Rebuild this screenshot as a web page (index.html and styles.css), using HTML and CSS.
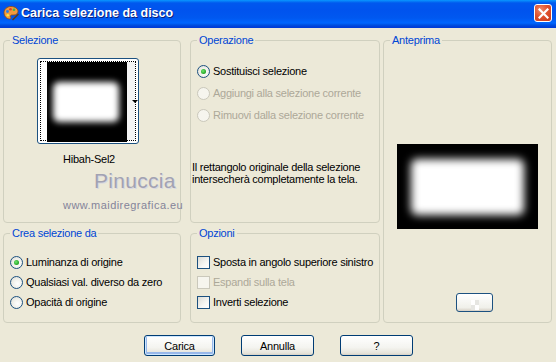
FILE: index.html
```
<!DOCTYPE html>
<html lang="it">
<head>
<meta charset="utf-8">
<title>Carica selezione da disco</title>
<link rel="stylesheet" href="styles.css">
</head>
<body>
<div class="window">
  <div class="titlebar">
    <svg class="app-icon" width="16" height="16" viewBox="0 0 16 16">
      <path d="M8 1.5C4 1.5 1 4.2 1 7.8c0 3.3 2.6 6.2 5.6 6.2 1.4 0 1.6-1 1-2-.6-1 0-2 1.3-2h2.1c2.3 0 4-1.5 4-3.7C15 3.7 12 1.5 8 1.5z" fill="#f29a3c" stroke="#8a4a12" stroke-width="0.8"/>
      <circle cx="4.5" cy="6.5" r="1.4" fill="#2f7de1"/>
      <circle cx="7.5" cy="4.3" r="1.3" fill="#e23b2e"/>
      <circle cx="11" cy="4.8" r="1.3" fill="#43b648"/>
      <circle cx="4.8" cy="10.2" r="1.3" fill="#f6e84a"/>
      <path d="M15 9.5l-5 5" stroke="#5a3a1a" stroke-width="1.6" stroke-linecap="round"/>
    </svg>
    <span class="title">Carica selezione da disco</span>
    <span class="close" aria-label="Chiudi">
      <svg width="11" height="11" viewBox="0 0 11 11"><path d="M1.5 1.5l8 8M9.5 1.5l-8 8" stroke="#fff" stroke-width="2.2" stroke-linecap="square"/></svg>
    </span>
  </div>
  <div class="content">
    <div class="groups">
      <fieldset class="group g-sel">
        <legend>Selezione</legend>
        <div class="thumb-btn">
          <div class="thumb-focus">
            <div class="thumb-img"><div class="blur-rect thumb-rect"></div></div>
            <div class="thumb-strip"><span class="drop-arrow"></span></div>
          </div>
        </div>
        <div class="thumb-name">Hibah-Sel2</div>
        <div class="watermark">
          <div class="wm-name">Pinuccia</div>
          <div class="wm-url">www.maidiregrafica.eu</div>
        </div>
      </fieldset>

      <fieldset class="group g-op">
        <legend>Operazione</legend>
        <div class="opt-list op-list">
          <label class="opt"><span class="radio checked"></span>Sostituisci selezione</label>
          <label class="opt disabled"><span class="radio"></span>Aggiungi alla selezione corrente</label>
          <label class="opt disabled"><span class="radio"></span>Rimuovi dalla selezione corrente</label>
        </div>
        <p class="desc">Il rettangolo originale della selezione intersecherà completamente la tela.</p>
      </fieldset>

      <fieldset class="group g-prev">
        <legend>Anteprima</legend>
        <div class="preview"><div class="blur-rect preview-rect"></div></div>
        <div class="small-btn">
          <svg width="14" height="10" viewBox="0 0 14 10"><path d="M3 0h4v5H3zM7 5h4v5H7z" fill="#fff"/><path d="M7 0h4v5H7zM3 5h4v5H3z" fill="#e6e6e2"/></svg>
        </div>
      </fieldset>

      <fieldset class="group g-crea">
        <legend>Crea selezione da</legend>
        <div class="opt-list crea-list">
          <label class="opt"><span class="radio checked"></span>Luminanza di origine</label>
          <label class="opt"><span class="radio"></span>Qualsiasi val. diverso da zero</label>
          <label class="opt"><span class="radio"></span>Opacità di origine</label>
        </div>
      </fieldset>

      <fieldset class="group g-opz">
        <legend>Opzioni</legend>
        <div class="opt-list crea-list">
          <label class="opt"><span class="check"></span>Sposta in angolo superiore sinistro</label>
          <label class="opt disabled"><span class="check"></span>Espandi sulla tela</label>
          <label class="opt"><span class="check"></span>Inverti selezione</label>
        </div>
      </fieldset>
    </div>
    <div class="buttons">
      <span class="btn default">Carica</span>
      <span class="btn">Annulla</span>
      <span class="btn">?</span>
    </div>
  </div>
</div>
</body>
</html>
```

FILE: styles.css
```
* { box-sizing: border-box; }
html, body { margin: 0; padding: 0; }
body {
  width: 556px;
  height: 362px;
  overflow: hidden;
  background: #ece9d8;
  font-family: "Liberation Sans", Arial, sans-serif;
  font-size: 11px;
  letter-spacing: -0.25px;
  color: #000;
}
.window {
  width: 556px;
  height: 362px;
  background: #ece9d8;
  display: flex;
  flex-direction: column;
}
.titlebar {
  height: 28px;
  flex: none;
  display: flex;
  align-items: center;
  padding: 0 4px 2px 3px;
  background: linear-gradient(to bottom, #0997ff 0, #0058ee 3px, #0053ee 10px, #0058f0 18px, #0066ff 23px, #0050e0 25px, #003dd7 27px, #003dd7 28px);
}
.app-icon { flex: none; margin-right: 2px; }
.title {
  color: #fff;
  font-weight: bold;
  font-size: 12.5px;
  letter-spacing: 0;
  text-shadow: 1px 1px 0 #0a1f7a;
  flex: 1;
}
.close {
  width: 18px;
  height: 18px;
  border: 1px solid #fff;
  border-radius: 3px;
  background: radial-gradient(circle at 35% 30%, #f08a6a 0, #e0522e 45%, #c8391a 100%);
  display: flex;
  align-items: center;
  justify-content: center;
}
.close svg { display: block; }

.content {
  flex: 1;
  padding: 6px 0 0 3px;
  display: flex;
  flex-direction: column;
}
.groups {
  display: grid;
  grid-template-columns: 187px 193px 169px;
  grid-template-rows: 189px 96px;
  row-gap: 4px;
}
.group {
  margin: 0;
  padding: 0;
  border: 1px solid #d0d0bf;
  border-radius: 4px;
  min-width: 0;
}
.group legend {
  color: #0046d5;
  padding: 0 2px;
  margin-left: 6px;
  line-height: 13px;
}
.g-sel { grid-column: 1; grid-row: 1; margin-right: 9px; }
.g-op { grid-column: 2; grid-row: 1; margin-right: 3px; }
.g-prev { grid-column: 3; grid-row: 1 / span 2; }
.g-crea { grid-column: 1; grid-row: 2; margin-right: 9px; }
.g-opz { grid-column: 2; grid-row: 2; margin-right: 3px; }

/* Selezione */
.thumb-btn {
  width: 102px;
  height: 86px;
  margin: 11px 0 0 33px;
  border: 1px solid #1c5180;
  border-radius: 3px;
  padding: 2px;
  background: #fff;
}
.thumb-focus {
  width: 100%;
  height: 100%;
  border: 1px dotted #000;
  display: flex;
  padding: 0 0 0 6px;
  background: #fff;
}
.thumb-img {
  width: 80px;
  height: 80px;
  background: #000;
  position: relative;
  overflow: hidden;
  flex: none;
}
.thumb-strip {
  flex: 1;
  background: #f4f4f4;
  display: flex;
  justify-content: flex-end;
  align-items: center;
  padding-right: 1px;
}
.drop-arrow {
  width: 0;
  height: 0;
  border-left: 3px solid transparent;
  border-right: 3px solid transparent;
  border-top: 3px solid #000;
  margin-right: -4px;
}
.blur-rect {
  position: absolute;
  background: #fff;
  border-radius: 6px;
  filter: blur(3px);
}
.thumb-rect { left: 6px; top: 20px; width: 66px; height: 40px; }
.thumb-name {
  text-align: center;
  margin: 9px 0 0 -6px;
  line-height: 13px;
}
.watermark {
  margin-left: 59px;
  margin-top: 4px;
  line-height: 1;
}
.wm-name {
  font-size: 21px;
  letter-spacing: 0.3px;
  color: #a2a2b2;
  margin-left: 31px;
  text-shadow: 1px 1px 0 #d8d8e2;
}
.wm-url {
  font-size: 11px;
  color: #84849a;
  letter-spacing: 0.45px;
  margin-top: 9px;
}

/* Options */
.opt-list { display: flex; flex-direction: column; }
.op-list { padding: 18px 0 0 6px; gap: 9px; }
.crea-list { padding: 16px 0 0 6px; gap: 7px; }
.opt {
  display: flex;
  align-items: center;
  gap: 3px;
  line-height: 13px;
  white-space: nowrap;
}
.opt.disabled { color: #aca899; }
.radio {
  width: 13px;
  height: 13px;
  border-radius: 50%;
  border: 1px solid #1c5180;
  background: radial-gradient(circle at 60% 60%, #ffffff 0, #f0f0ea 50%, #d8d8d0 100%);
  flex: none;
  display: flex;
  align-items: center;
  justify-content: center;
}
.radio.checked::after {
  content: "";
  width: 5px;
  height: 5px;
  border-radius: 50%;
  background: radial-gradient(circle at 40% 40%, #6ee86e 0, #21a121 70%);
}
.opt.disabled .radio, .opt.disabled .check {
  border-color: #cac8bb;
  background: #f6f5ee;
}
.check {
  width: 13px;
  height: 13px;
  border: 1px solid #1c5180;
  background: linear-gradient(135deg, #dcdcd6 0, #f6f6f3 60%, #ffffff 100%);
  flex: none;
}
.desc {
  margin: 39px 0 0 1px;
  line-height: 12px;
  width: 180px;
}

/* Anteprima */
.preview {
  width: 141px;
  height: 85px;
  background: #000;
  margin: 97px auto 0;
  position: relative;
  overflow: hidden;
}
.preview-rect { left: 14px; top: 15px; width: 113px; height: 56px; filter: blur(4px); }
.small-btn {
  width: 37px;
  height: 19px;
  margin: 64px 0 0 72px;
  border: 1px solid #1c5180;
  border-radius: 3px;
  background: linear-gradient(#fff, #f0f0ea 80%, #d6d0c5);
  display: flex;
  align-items: flex-end;
  justify-content: center;
  padding-bottom: 1px;
}
.small-btn svg { display: block; }

/* Buttons */
.buttons {
  display: flex;
  gap: 26px;
  margin: 12px 0 0 141px;
}
.btn {
  width: 73px;
  height: 21px;
  border: 1px solid #003c74;
  border-radius: 3px;
  background: linear-gradient(#ffffff 0, #f4f4f0 60%, #e6e4da 90%, #d6d0c5 100%);
  display: flex;
  align-items: center;
  justify-content: center;
}
.btn.default {
  width: 71px;
  box-shadow: inset 0 0 0 1px #cee7ff, inset 0 -1px 0 2px #98b8ea;
}
```
